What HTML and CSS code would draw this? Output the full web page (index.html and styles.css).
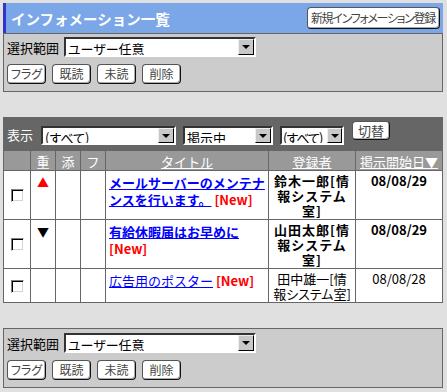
FILE: index.html
```html
<!DOCTYPE html>
<html lang="ja">
<head>
    <meta charset="UTF-8">
    <title>インフォメーション一覧</title>
    <link rel="stylesheet" href="styles.css">
</head>
<body>
    <div class="panel">
        <div class="panel-head">
            <h1>インフォメーション一覧</h1>
            <button class="btn btn-new">新規インフォメーション登録</button>
        </div>
        <div class="panel-body">
            <div class="row">
                <label>選択範囲</label>
                <span class="select w-scope"><select><option>ユーザー任意</option></select><span class="arrow"></span></span>
            </div>
            <div class="row btns">
                <button class="btn btn-sm">フラグ</button>
                <button class="btn btn-sm">既読</button>
                <button class="btn btn-sm">未読</button>
                <button class="btn btn-sm">削除</button>
            </div>
        </div>
    </div>

    <div class="list">
        <div class="toolbar">
            <span class="label">表示</span>
            <span class="select w-kind"><select><option>(すべて)</option></select><span class="arrow"></span></span>
            <span class="select w-state"><select><option>掲示中</option></select><span class="arrow"></span></span>
            <span class="select w-all"><select><option>(すべて)</option></select><span class="arrow"></span></span>
            <button class="btn btn-switch">切替</button>
        </div>
        <table>
            <colgroup>
                <col style="width:27px"><col style="width:25px"><col style="width:25px"><col style="width:25px">
                <col style="width:163px"><col style="width:87px"><col>
            </colgroup>
            <tr>
                <th></th>
                <th>重</th>
                <th>添</th>
                <th>フ</th>
                <th><a href="#">タイトル</a></th>
                <th><a href="#">登録者</a></th>
                <th><a href="#">掲示開始日▼</a></th>
            </tr>
            <tr class="unread">
                <td class="check"><input type="checkbox"></td>
                <td class="mark"><span class="up">▲</span></td>
                <td></td>
                <td></td>
                <td class="title"><a href="#">メールサーバーのメンテナンスを行います。</a> <span class="new">[New]</span></td>
                <td class="poster">鈴木一郎[情報システム室]</td>
                <td class="date">08/08/29</td>
            </tr>
            <tr class="unread">
                <td class="check"><input type="checkbox"></td>
                <td class="mark"><span class="down">▼</span></td>
                <td></td>
                <td></td>
                <td class="title"><a href="#">有給休暇届はお早めに</a> <span class="new">[New]</span></td>
                <td class="poster">山田太郎[情報システム室]</td>
                <td class="date">08/08/29</td>
            </tr>
            <tr>
                <td class="check"><input type="checkbox"></td>
                <td class="mark"></td>
                <td></td>
                <td></td>
                <td class="title"><a href="#">広告用のポスター</a> <span class="new">[New]</span></td>
                <td class="poster">田中雄一[情報システム室]</td>
                <td class="date">08/08/28</td>
            </tr>
        </table>
    </div>

    <div class="panel-body bottom">
        <div class="row">
            <label>選択範囲</label>
            <span class="select w-scope"><select><option>ユーザー任意</option></select><span class="arrow"></span></span>
        </div>
        <div class="row btns">
            <button class="btn btn-sm">フラグ</button>
            <button class="btn btn-sm">既読</button>
            <button class="btn btn-sm">未読</button>
            <button class="btn btn-sm">削除</button>
        </div>
    </div>
</body>
</html>
```

FILE: styles.css
```css
* {
    box-sizing: border-box;
}

body {
    margin: 0;
    padding: 3px 4px 0 3px;
    background-color: #e0e0e0;
    color: #000;
    font-family: "Noto Sans CJK JP", sans-serif;
    font-size: 13px;
    line-height: 15px;
}

.panel-head {
    display: flex;
    align-items: center;
    justify-content: space-between;
    height: 30px;
    padding: 0 3px 0 5px;
    background-color: #7ba6e7;
    border-left: 3px solid #3333cc;
}

h1 {
    margin: 0;
    color: #fff;
    font-size: 14.5px;
    font-weight: bold;
}

.panel-body {
    background-color: #cccccc;
    border: 1px solid #666;
    padding: 3px 3px 7px;
}

.row {
    display: flex;
    align-items: center;
    gap: 5px;
}

.btns {
    margin-top: 7px;
    gap: 6px;
}

.bottom {
    margin-top: 25px;
    padding-top: 4px;
}

.btn {
    height: 20px;
    padding: 0 5px;
    background-color: #fff;
    color: #444;
    border: 1px solid #555;
    border-right-color: #111;
    border-bottom-color: #111;
    border-radius: 4px;
    box-shadow: inset -1px -1px 0 #aaa;
    font-family: "Noto Sans CJK JP", sans-serif;
    font-size: 12px;
    font-feature-settings: "palt";
    line-height: 16px;
    cursor: pointer;
}

.btn-new {
    height: 22px;
    padding: 0 4px 0 3px;
    font-size: 12px;
    letter-spacing: -1.3px;
}

.btn-sm {
    width: 39px;
    padding: 0;
}

.btn-switch {
    width: 38px;
    height: 19px;
    padding: 0;
    margin-left: 1px;
    font-size: 13px;
}

.select {
    display: inline-flex;
    height: 20px;
    background-color: #fff;
    border: 2px solid;
    border-color: #333 #fff #fff #333;
}

.select select {
    flex: 1;
    min-width: 0;
    appearance: none;
    border: none;
    outline: none;
    background: #fff;
    padding: 0 2px;
    font-family: "Noto Sans CJK JP", sans-serif;
    font-size: 13px;
    font-feature-settings: "palt";
    color: #000;
}

.arrow {
    display: flex;
    align-items: center;
    justify-content: center;
    width: 16px;
    background-color: #c8c8c8;
    border: 1px solid;
    border-color: #eee #000 #000 #eee;
}

.arrow::after {
    content: "";
    border-top: 4px solid #000;
    border-left: 4px solid transparent;
    border-right: 4px solid transparent;
}

.w-scope { width: 192px; }
.w-kind { width: 135px; height: 19px; }
.w-state { width: 90px; height: 19px; }
.w-all { width: 64px; height: 19px; }

.w-all select {
    padding: 0 0 0 1px;
    letter-spacing: -1px;
}

.w-all .arrow {
    width: 15px;
}

.list {
    margin-top: 25px;
    background-color: #666;
}

.toolbar {
    display: flex;
    align-items: flex-start;
    gap: 7px;
    height: 33px;
    padding: 4px 4px 0;
}

.toolbar .select {
    margin-top: 5px;
}

.toolbar .label {
    margin-top: 6px;
    margin-right: 1px;
    color: #fff;
}

table {
    width: 100%;
    border-collapse: collapse;
    table-layout: fixed;
}

th, td {
    border: 1px solid #666;
    padding: 2px 1px 1px;
    line-height: 15px;
}

th {
    height: 20px;
    background-color: #999;
    color: #fff;
    font-weight: normal;
}

th a {
    color: #fff;
}

td {
    background-color: #fff;
    vertical-align: top;
    text-align: center;
}

td.check {
    vertical-align: middle;
}

td.title {
    text-align: left;
    padding: 3px 1px 1px 3px;
    line-height: 17px;
}

td.title a {
    color: #0000ff;
}

.new {
    color: #ff0000;
    font-weight: bold;
}

td.poster {
    padding: 2px 3px 1px;
    font-feature-settings: "palt";
}

.unread td {
    font-weight: bold;
}

.unread td.poster {
    letter-spacing: 1px;
    font-feature-settings: normal;
}

.mark {
    font-size: 12px;
    padding-top: 4px;
}

.up {
    color: #ff0000;
}

.down {
    color: #000;
}

input[type="checkbox"] {
    appearance: none;
    display: block;
    width: 13px;
    height: 13px;
    margin: 0 auto;
    background-color: #fff;
    border: 1px solid;
    border-color: #808080 #fff #fff #808080;
    box-shadow: inset 1px 1px 0 #000, inset -1px -1px 0 #d4d4d4;
}
```
